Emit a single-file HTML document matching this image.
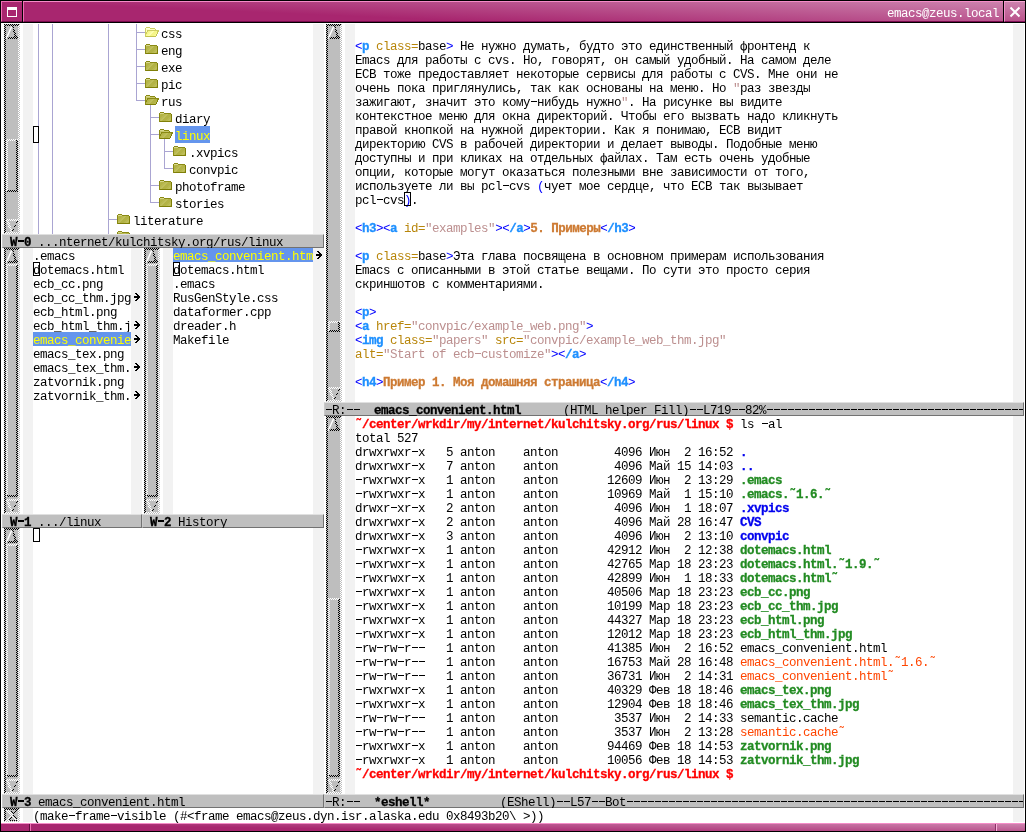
<!DOCTYPE html>
<html><head><meta charset="utf-8"><title>emacs@zeus.local</title>
<style>
html,body{margin:0;padding:0}
body{width:1026px;height:832px;position:relative;overflow:hidden;background:#fff;
 font-family:"Liberation Mono",monospace;font-size:12.5px;color:#000}
.b{position:absolute}
.l{position:absolute;will-change:transform;height:14px;line-height:14px;white-space:pre;letter-spacing:-0.5012px;
 padding-top:1.6736px;box-sizing:content-box;margin-top:0}
.l span{letter-spacing:inherit}
.B,.kt,.kh,.pr,.dr,.ex{-webkit-text-stroke:0.3px}
.B{font-weight:bold}
.d{display:inline-block;width:7px;height:5px;background:linear-gradient(currentColor,currentColor) 1px 0/6px 1px no-repeat}
.B .d,.pr .d,.ex .d,.dr .d{height:6px;background-size:6px 2px}
.kb{color:#0000ff}
.kt{color:#1e90ff;font-weight:bold}
.ka{color:#b8860b}
.ks{color:#bc8f8f}
.kh{color:#cd7a32;font-weight:bold}
.pr{color:#ff0000;font-weight:bold}
.dr{color:#0000ee;font-weight:bold}
.ex{color:#228b22;font-weight:bold}
.bk{color:#ff4500}
.hy{color:#ffff00}
.ml{position:absolute;height:14px;background:#bfbfbf;box-sizing:border-box;
 border-top:1px solid #e0e0e0;border-left:1px solid #cacaca;border-bottom:1px solid #727272;border-right:1px solid #727272}
.ml .l{right:0;overflow:hidden;height:12.4px}
svg{position:absolute;left:0;top:0}
</style></head><body>

<div class="b" style="left:23px;top:24px;width:10px;height:210px;background:#f2f2f2"></div>
<div class="b" style="left:313px;top:24px;width:11px;height:210px;background:#f2f2f2"></div>
<div class="b" style="left:23px;top:248px;width:10px;height:266px;background:#f2f2f2"></div>
<div class="b" style="left:131px;top:248px;width:11px;height:266px;background:#f2f2f2"></div>
<div class="b" style="left:163px;top:248px;width:10px;height:266px;background:#f2f2f2"></div>
<div class="b" style="left:313px;top:248px;width:11px;height:266px;background:#f2f2f2"></div>
<div class="b" style="left:23px;top:528px;width:10px;height:266px;background:#f2f2f2"></div>
<div class="b" style="left:313px;top:528px;width:11px;height:266px;background:#f2f2f2"></div>
<div class="b" style="left:345px;top:24px;width:10px;height:378px;background:#f2f2f2"></div>
<div class="b" style="left:1013px;top:24px;width:11px;height:378px;background:#f2f2f2"></div>
<div class="b" style="left:345px;top:416px;width:10px;height:378px;background:#f2f2f2"></div>
<div class="b" style="left:1013px;top:416px;width:11px;height:378px;background:#f2f2f2"></div>
<div class="b" style="left:23px;top:808px;width:10px;height:14px;background:#f2f2f2"></div>
<div class="b" style="left:1013px;top:808px;width:11px;height:14px;background:#f2f2f2"></div>
<div class="l" style="left:161px;top:26px">css</div>
<div class="l" style="left:161px;top:43px">eng</div>
<div class="l" style="left:161px;top:60px">exe</div>
<div class="l" style="left:161px;top:77px">pic</div>
<div class="l" style="left:161px;top:94px">rus</div>
<div class="l" style="left:175px;top:111px">diary</div>
<div class="b" style="left:175px;top:126px;width:35px;height:17px;background:#6495ed"></div>
<div class="l" style="left:175px;top:128px"><span class="hy">linux</span></div>
<div class="l" style="left:189px;top:145px">.xvpics</div>
<div class="l" style="left:189px;top:162px">convpic</div>
<div class="l" style="left:175px;top:179px">photoframe</div>
<div class="l" style="left:175px;top:196px">stories</div>
<div class="l" style="left:133px;top:213px">literature</div>
<div class="l" style="left:33px;top:248px">.emacs</div>
<div class="l" style="left:33px;top:262px">dotemacs.html</div>
<div class="l" style="left:33px;top:276px">ecb_cc.png</div>
<div class="l" style="left:33px;top:290px">ecb_cc_thm.jpg</div>
<div class="l" style="left:33px;top:304px">ecb_html.png</div>
<div class="l" style="left:33px;top:318px">ecb_html_thm.j</div>
<div class="b" style="left:33px;top:332px;width:98px;height:14px;background:#6495ed"></div>
<div class="l" style="left:33px;top:332px"><span class="hy">emacs_convenie</span></div>
<div class="l" style="left:33px;top:346px">emacs_tex.png</div>
<div class="l" style="left:33px;top:360px">emacs_tex_thm.</div>
<div class="l" style="left:33px;top:374px">zatvornik.png</div>
<div class="l" style="left:33px;top:388px">zatvornik_thm.</div>
<div class="b" style="left:173px;top:248px;width:140px;height:14px;background:#6495ed"></div>
<div class="l" style="left:173px;top:248px"><span class="hy">emacs_convenient.htm</span></div>
<div class="l" style="left:173px;top:262px">dotemacs.html</div>
<div class="l" style="left:173px;top:276px">.emacs</div>
<div class="l" style="left:173px;top:290px">RusGenStyle.css</div>
<div class="l" style="left:173px;top:304px">dataformer.cpp</div>
<div class="l" style="left:173px;top:318px">dreader.h</div>
<div class="l" style="left:173px;top:332px">Makefile</div>
<div class="l" style="left:355px;top:38px"><span class="kb">&lt;</span><span class="kt">p</span> <span class="ka">class=</span>base<span class="kb">&gt;</span> Не нужно думать, будто это единственный фронтенд к</div>
<div class="l" style="left:355px;top:52px">Emacs для работы с cvs. Но, говорят, он самый удобный. На самом деле</div>
<div class="l" style="left:355px;top:66px">ECB тоже предоставляет некоторые сервисы для работы с CVS. Мне они не</div>
<div class="l" style="left:355px;top:80px">очень пока приглянулись, так как основаны на меню. Но <span class="ks">"</span>раз звезды</div>
<div class="l" style="left:355px;top:94px">зажигают, значит это кому<i class="d"></i>нибудь нужно<span class="ks">"</span>. На рисунке вы видите</div>
<div class="l" style="left:355px;top:108px">контекстное меню для окна директорий. Чтобы его вызвать надо кликнуть</div>
<div class="l" style="left:355px;top:122px">правой кнопкой на нужной директории. Как я понимаю, ECB видит</div>
<div class="l" style="left:355px;top:136px">директорию CVS в рабочей директории и делает выводы. Подобные меню</div>
<div class="l" style="left:355px;top:150px">доступны и при кликах на отдельных файлах. Там есть очень удобные</div>
<div class="l" style="left:355px;top:164px">опции, которые могут оказаться полезными вне зависимости от того,</div>
<div class="l" style="left:355px;top:178px">используете ли вы pcl<i class="d"></i>cvs <span class="kb">(</span>чует мое сердце, что ECB так вызывает</div>
<div class="l" style="left:355px;top:192px">pcl<i class="d"></i>cvs<span class="kb">)</span>.</div>
<div class="l" style="left:355px;top:220px"><span class="kb">&lt;</span><span class="kt">h3</span><span class="kb">&gt;</span><span class="kb">&lt;</span><span class="kt">a</span> <span class="ka">id=</span><span class="ks">"examples"</span><span class="kb">&gt;</span><span class="kb">&lt;</span><span class="kt">/a</span><span class="kb">&gt;</span><span class="kh">5. Примеры</span><span class="kb">&lt;</span><span class="kt">/h3</span><span class="kb">&gt;</span></div>
<div class="l" style="left:355px;top:248px"><span class="kb">&lt;</span><span class="kt">p</span> <span class="ka">class=</span>base<span class="kb">&gt;</span>Эта глава посвящена в основном примерам использования</div>
<div class="l" style="left:355px;top:262px">Emacs с описанными в этой статье вещами. По сути это просто серия</div>
<div class="l" style="left:355px;top:276px">скриншотов с комментариями.</div>
<div class="l" style="left:355px;top:304px"><span class="kb">&lt;</span><span class="kt">p</span><span class="kb">&gt;</span></div>
<div class="l" style="left:355px;top:318px"><span class="kb">&lt;</span><span class="kt">a</span> <span class="ka">href=</span><span class="ks">"convpic/example_web.png"</span><span class="kb">&gt;</span></div>
<div class="l" style="left:355px;top:332px"><span class="kb">&lt;</span><span class="kt">img</span> <span class="ka">class=</span><span class="ks">"papers"</span> <span class="ka">src=</span><span class="ks">"convpic/example_web_thm.jpg"</span></div>
<div class="l" style="left:355px;top:346px"><span class="ka">alt=</span><span class="ks">"Start of ecb<i class="d"></i>customize"</span><span class="kb">&gt;</span><span class="kb">&lt;</span><span class="kt">/a</span><span class="kb">&gt;</span></div>
<div class="l" style="left:355px;top:374px"><span class="kb">&lt;</span><span class="kt">h4</span><span class="kb">&gt;</span><span class="kh">Пример 1. Моя домашняя страница</span><span class="kb">&lt;</span><span class="kt">/h4</span><span class="kb">&gt;</span></div>
<div class="l" style="left:355px;top:416px"><span class="pr">˜/center/wrkdir/my/internet/kulchitsky.org/rus/linux $ </span>ls <i class="d"></i>al</div>
<div class="l" style="left:355px;top:430px">total 527</div>
<div class="l" style="left:355px;top:444px">drwxrwxr<i class="d"></i>x   5 anton    anton        4096 Июн  2 16:52 <span class="dr">.</span></div>
<div class="l" style="left:355px;top:458px">drwxrwxr<i class="d"></i>x   7 anton    anton        4096 Май 15 14:03 <span class="dr">..</span></div>
<div class="l" style="left:355px;top:472px"><i class="d"></i>rwxrwxr<i class="d"></i>x   1 anton    anton       12609 Июн  2 13:29 <span class="ex">.emacs</span></div>
<div class="l" style="left:355px;top:486px"><i class="d"></i>rwxrwxr<i class="d"></i>x   1 anton    anton       10969 Май  1 15:10 <span class="ex">.emacs.˜1.6.˜</span></div>
<div class="l" style="left:355px;top:500px">drwxr<i class="d"></i>xr<i class="d"></i>x   2 anton    anton        4096 Июн  1 18:07 <span class="dr">.xvpics</span></div>
<div class="l" style="left:355px;top:514px">drwxrwxr<i class="d"></i>x   2 anton    anton        4096 Май 28 16:47 <span class="dr">CVS</span></div>
<div class="l" style="left:355px;top:528px">drwxrwxr<i class="d"></i>x   3 anton    anton        4096 Июн  2 13:10 <span class="dr">convpic</span></div>
<div class="l" style="left:355px;top:542px"><i class="d"></i>rwxrwxr<i class="d"></i>x   1 anton    anton       42912 Июн  2 12:38 <span class="ex">dotemacs.html</span></div>
<div class="l" style="left:355px;top:556px"><i class="d"></i>rwxrwxr<i class="d"></i>x   1 anton    anton       42765 Мар 18 23:23 <span class="ex">dotemacs.html.˜1.9.˜</span></div>
<div class="l" style="left:355px;top:570px"><i class="d"></i>rwxrwxr<i class="d"></i>x   1 anton    anton       42899 Июн  1 18:33 <span class="ex">dotemacs.html˜</span></div>
<div class="l" style="left:355px;top:584px"><i class="d"></i>rwxrwxr<i class="d"></i>x   1 anton    anton       40506 Мар 18 23:23 <span class="ex">ecb_cc.png</span></div>
<div class="l" style="left:355px;top:598px"><i class="d"></i>rwxrwxr<i class="d"></i>x   1 anton    anton       10199 Мар 18 23:23 <span class="ex">ecb_cc_thm.jpg</span></div>
<div class="l" style="left:355px;top:612px"><i class="d"></i>rwxrwxr<i class="d"></i>x   1 anton    anton       44327 Мар 18 23:23 <span class="ex">ecb_html.png</span></div>
<div class="l" style="left:355px;top:626px"><i class="d"></i>rwxrwxr<i class="d"></i>x   1 anton    anton       12012 Мар 18 23:23 <span class="ex">ecb_html_thm.jpg</span></div>
<div class="l" style="left:355px;top:640px"><i class="d"></i>rw<i class="d"></i>rw<i class="d"></i>r<i class="d"></i><i class="d"></i>   1 anton    anton       41385 Июн  2 16:52 emacs_convenient.html</div>
<div class="l" style="left:355px;top:654px"><i class="d"></i>rw<i class="d"></i>rw<i class="d"></i>r<i class="d"></i><i class="d"></i>   1 anton    anton       16753 Май 28 16:48 <span class="bk">emacs_convenient.html.˜1.6.˜</span></div>
<div class="l" style="left:355px;top:668px"><i class="d"></i>rw<i class="d"></i>rw<i class="d"></i>r<i class="d"></i><i class="d"></i>   1 anton    anton       36731 Июн  2 14:31 <span class="bk">emacs_convenient.html˜</span></div>
<div class="l" style="left:355px;top:682px"><i class="d"></i>rwxrwxr<i class="d"></i>x   1 anton    anton       40329 Фев 18 18:46 <span class="ex">emacs_tex.png</span></div>
<div class="l" style="left:355px;top:696px"><i class="d"></i>rwxrwxr<i class="d"></i>x   1 anton    anton       12904 Фев 18 18:46 <span class="ex">emacs_tex_thm.jpg</span></div>
<div class="l" style="left:355px;top:710px"><i class="d"></i>rw<i class="d"></i>rw<i class="d"></i>r<i class="d"></i><i class="d"></i>   1 anton    anton        3537 Июн  2 14:33 semantic.cache</div>
<div class="l" style="left:355px;top:724px"><i class="d"></i>rw<i class="d"></i>rw<i class="d"></i>r<i class="d"></i><i class="d"></i>   1 anton    anton        3537 Июн  2 13:28 <span class="bk">semantic.cache˜</span></div>
<div class="l" style="left:355px;top:738px"><i class="d"></i>rwxrwxr<i class="d"></i>x   1 anton    anton       94469 Фев 18 14:53 <span class="ex">zatvornik.png</span></div>
<div class="l" style="left:355px;top:752px"><i class="d"></i>rwxrwxr<i class="d"></i>x   1 anton    anton       10056 Фев 18 14:53 <span class="ex">zatvornik_thm.jpg</span></div>
<div class="l" style="left:355px;top:766px"><span class="pr">˜/center/wrkdir/my/internet/kulchitsky.org/rus/linux $ </span></div>
<div class="l" style="left:33px;top:808px">(make<i class="d"></i>frame<i class="d"></i>visible (#&lt;frame emacs@zeus.dyn.isr.alaska.edu 0x8493b20\ &gt;))</div>
<div class="ml" style="left:2px;top:234px;width:322px">
<div class="l" style="left:0;top:-1px"> <span class="B">W<i class="d"></i>0</span> ...nternet/kulchitsky.org/rus/linux</div></div>
<div class="ml" style="left:2px;top:514px;width:140px">
<div class="l" style="left:0;top:-1px"> <span class="B">W<i class="d"></i>1</span> .../linux</div></div>
<div class="ml" style="left:142px;top:514px;width:182px">
<div class="l" style="left:0;top:-1px"> <span class="B">W<i class="d"></i>2</span> History</div></div>
<div class="ml" style="left:2px;top:794px;width:322px">
<div class="l" style="left:0;top:-1px"> <span class="B">W<i class="d"></i>3</span> emacs_convenient.html</div></div>
<div class="ml" style="left:324px;top:402px;width:700px">
<div class="l" style="left:0;top:-1px"><i class="d"></i>R:<i class="d"></i><i class="d"></i>  <span class="B">emacs_convenient.html</span>      (HTML helper Fill)<i class="d"></i><i class="d"></i>L719<i class="d"></i><i class="d"></i>82%<i class="d"></i><i class="d"></i><i class="d"></i><i class="d"></i><i class="d"></i><i class="d"></i><i class="d"></i><i class="d"></i><i class="d"></i><i class="d"></i><i class="d"></i><i class="d"></i><i class="d"></i><i class="d"></i><i class="d"></i><i class="d"></i><i class="d"></i><i class="d"></i><i class="d"></i><i class="d"></i><i class="d"></i><i class="d"></i><i class="d"></i><i class="d"></i><i class="d"></i><i class="d"></i><i class="d"></i><i class="d"></i><i class="d"></i><i class="d"></i><i class="d"></i><i class="d"></i><i class="d"></i><i class="d"></i><i class="d"></i><i class="d"></i><i class="d"></i><i class="d"></i><i class="d"></i><i class="d"></i><i class="d"></i><i class="d"></i><i class="d"></i><i class="d"></i><i class="d"></i><i class="d"></i><i class="d"></i><i class="d"></i><i class="d"></i><i class="d"></i><i class="d"></i><i class="d"></i><i class="d"></i><i class="d"></i><i class="d"></i><i class="d"></i><i class="d"></i><i class="d"></i><i class="d"></i><i class="d"></i></div></div>
<div class="ml" style="left:324px;top:794px;width:700px">
<div class="l" style="left:0;top:-1px"><i class="d"></i>R:<i class="d"></i><i class="d"></i>  <span class="B">*eshell*</span>          (EShell)<i class="d"></i><i class="d"></i>L57<i class="d"></i><i class="d"></i>Bot<i class="d"></i><i class="d"></i><i class="d"></i><i class="d"></i><i class="d"></i><i class="d"></i><i class="d"></i><i class="d"></i><i class="d"></i><i class="d"></i><i class="d"></i><i class="d"></i><i class="d"></i><i class="d"></i><i class="d"></i><i class="d"></i><i class="d"></i><i class="d"></i><i class="d"></i><i class="d"></i><i class="d"></i><i class="d"></i><i class="d"></i><i class="d"></i><i class="d"></i><i class="d"></i><i class="d"></i><i class="d"></i><i class="d"></i><i class="d"></i><i class="d"></i><i class="d"></i><i class="d"></i><i class="d"></i><i class="d"></i><i class="d"></i><i class="d"></i><i class="d"></i><i class="d"></i><i class="d"></i><i class="d"></i><i class="d"></i><i class="d"></i><i class="d"></i><i class="d"></i><i class="d"></i><i class="d"></i><i class="d"></i><i class="d"></i><i class="d"></i><i class="d"></i><i class="d"></i><i class="d"></i><i class="d"></i><i class="d"></i><i class="d"></i><i class="d"></i><i class="d"></i><i class="d"></i><i class="d"></i><i class="d"></i><i class="d"></i><i class="d"></i><i class="d"></i><i class="d"></i><i class="d"></i><i class="d"></i><i class="d"></i><i class="d"></i><i class="d"></i></div></div>
<div class="b" style="left:0;top:0;width:1026px;height:23px;background:#000"></div>
<div class="b" style="left:1px;top:1px;width:21px;height:21px;background:#a8266f;box-sizing:border-box;border-top:1px solid #f070b4;border-left:1px solid #f070b4;border-bottom:1px solid #6e0e46"></div>
<div class="b" style="left:23px;top:1px;width:980px;height:21px;background:linear-gradient(2.42deg,#a8266f 0%,#a8266f 31%,#cc82ad 100%);box-sizing:border-box;border-top:1px solid #f58cc8;border-left:1px solid #f070b4;border-bottom:1px solid #780a4c"></div>
<div class="b" style="left:1004px;top:1px;width:21px;height:21px;background:linear-gradient(180deg,#cc82ad,#b9528a);box-sizing:border-box;border-top:1px solid #f8a8d4;border-left:1px solid #f090c8;border-bottom:1px solid #801058"></div>
<div class="l" style="left:887px;top:5px;color:#fff">emacs@zeus.local</div>

<div class="b" style="left:0;top:823px;width:1026px;height:9px;background:#000"></div>
<div class="b" style="left:1px;top:823px;width:1024px;height:8px;background:linear-gradient(0.87deg,#a8266f 0%,#a8266f 31%,#cc82ad 100%);box-sizing:border-box;border-top:1px solid #f58cc8"></div>
<div class="b" style="left:29px;top:824px;width:1px;height:7px;background:#5e0a3c"></div>
<div class="b" style="left:30px;top:824px;width:1px;height:7px;background:#f070b4"></div>
<div class="b" style="left:995px;top:824px;width:1px;height:7px;background:#8a3066"></div>
<div class="b" style="left:996px;top:824px;width:1px;height:7px;background:#fbb4dc"></div>

<div class="b" style="left:0px;top:0px;width:1px;height:832px;background:#000"></div>
<div class="b" style="left:1025px;top:0px;width:1px;height:832px;background:#000"></div>
<svg width="1026" height="832" viewBox="0 0 1026 832" shape-rendering="crispEdges">
<defs>
<pattern id="pd" width="2" height="2" patternUnits="userSpaceOnUse"><rect width="2" height="2" fill="#bebebe"/><rect x="0" y="0" width="1" height="1" fill="#000"/><rect x="1" y="1" width="1" height="1" fill="#000"/></pattern>
<pattern id="pl" width="2" height="2" patternUnits="userSpaceOnUse"><rect width="2" height="2" fill="#bebebe"/><rect x="0" y="0" width="1" height="1" fill="#fff"/><rect x="1" y="1" width="1" height="1" fill="#fff"/></pattern>
<linearGradient id="fg" x1="0" y1="0" x2="1" y2="1"><stop offset="0" stop-color="#a9a93c"/><stop offset="0.5" stop-color="#c0c062"/><stop offset="1" stop-color="#a3a334"/></linearGradient>
<linearGradient id="fy" x1="0" y1="0" x2="1" y2="1"><stop offset="0" stop-color="#fbfbb0"/><stop offset="1" stop-color="#f3f38a"/></linearGradient>
<g id="fc"><rect x="1" y="0" width="4" height="1" fill="#8a8a14"/><rect x="0" y="1" width="1" height="1" fill="#8a8a14"/><rect x="1" y="1" width="4" height="1" fill="#d8d88c"/><rect x="5" y="1" width="7" height="1" fill="#8a8a14"/><rect x="0" y="2" width="1" height="1" fill="#8a8a14"/><rect x="1" y="2" width="1" height="1" fill="#b9b950"/><rect x="2" y="2" width="3" height="1" fill="#b3b346"/><rect x="5" y="2" width="2" height="1" fill="#b9b950"/><rect x="7" y="2" width="2" height="1" fill="#bfbf5c"/><rect x="9" y="2" width="3" height="1" fill="#b3b346"/><rect x="12" y="2" width="1" height="1" fill="#7f7f08"/><rect x="0" y="3" width="1" height="1" fill="#8a8a14"/><rect x="1" y="3" width="3" height="1" fill="#b3b346"/><rect x="4" y="3" width="2" height="1" fill="#b9b950"/><rect x="6" y="3" width="2" height="1" fill="#bfbf5c"/><rect x="8" y="3" width="4" height="1" fill="#b3b346"/><rect x="12" y="3" width="1" height="1" fill="#7f7f08"/><rect x="0" y="4" width="1" height="1" fill="#8a8a14"/><rect x="1" y="4" width="2" height="1" fill="#b3b346"/><rect x="3" y="4" width="2" height="1" fill="#b9b950"/><rect x="5" y="4" width="2" height="1" fill="#bfbf5c"/><rect x="7" y="4" width="4" height="1" fill="#b3b346"/><rect x="11" y="4" width="1" height="1" fill="#b9b950"/><rect x="12" y="4" width="1" height="1" fill="#7f7f08"/><rect x="0" y="5" width="1" height="1" fill="#8a8a14"/><rect x="1" y="5" width="1" height="1" fill="#b3b346"/><rect x="2" y="5" width="2" height="1" fill="#b9b950"/><rect x="4" y="5" width="2" height="1" fill="#bfbf5c"/><rect x="6" y="5" width="4" height="1" fill="#b3b346"/><rect x="10" y="5" width="2" height="1" fill="#b9b950"/><rect x="12" y="5" width="1" height="1" fill="#7f7f08"/><rect x="0" y="6" width="1" height="1" fill="#8a8a14"/><rect x="1" y="6" width="2" height="1" fill="#b9b950"/><rect x="3" y="6" width="2" height="1" fill="#bfbf5c"/><rect x="5" y="6" width="4" height="1" fill="#b3b346"/><rect x="9" y="6" width="2" height="1" fill="#b9b950"/><rect x="11" y="6" width="1" height="1" fill="#bfbf5c"/><rect x="12" y="6" width="1" height="1" fill="#7f7f08"/><rect x="0" y="7" width="1" height="1" fill="#8a8a14"/><rect x="1" y="7" width="1" height="1" fill="#b9b950"/><rect x="2" y="7" width="2" height="1" fill="#bfbf5c"/><rect x="4" y="7" width="4" height="1" fill="#b3b346"/><rect x="8" y="7" width="2" height="1" fill="#b9b950"/><rect x="10" y="7" width="2" height="1" fill="#bfbf5c"/><rect x="12" y="7" width="1" height="1" fill="#7f7f08"/><rect x="0" y="8" width="1" height="1" fill="#8a8a14"/><rect x="1" y="8" width="2" height="1" fill="#bfbf5c"/><rect x="3" y="8" width="4" height="1" fill="#b3b346"/><rect x="7" y="8" width="2" height="1" fill="#b9b950"/><rect x="9" y="8" width="2" height="1" fill="#bfbf5c"/><rect x="11" y="8" width="1" height="1" fill="#b3b346"/><rect x="12" y="8" width="1" height="1" fill="#7f7f08"/><rect x="0" y="9" width="1" height="1" fill="#8a8a14"/><rect x="1" y="9" width="12" height="1" fill="#7f7f08"/></g>
<g id="fo"><rect x="1" y="0" width="4" height="1" fill="#8a8a14"/><rect x="0" y="1" width="1" height="1" fill="#8a8a14"/><rect x="1" y="1" width="4" height="1" fill="#d8d88c"/><rect x="5" y="1" width="5" height="1" fill="#8a8a14"/><rect x="0" y="2" width="1" height="1" fill="#8a8a14"/><rect x="1" y="2" width="9" height="1" fill="#c6c66a"/><rect x="10" y="2" width="1" height="1" fill="#8a8a14"/><rect x="0" y="3" width="1" height="1" fill="#8a8a14"/><rect x="1" y="3" width="1" height="1" fill="#c6c66a"/><rect x="2" y="3" width="12" height="1" fill="#8a8a14"/><rect x="0" y="4" width="1" height="1" fill="#8a8a14"/><rect x="1" y="4" width="1" height="1" fill="#c6c66a"/><rect x="2" y="4" width="1" height="1" fill="#8a8a14"/><rect x="3" y="4" width="2" height="1" fill="#b3b346"/><rect x="5" y="4" width="2" height="1" fill="#b9b950"/><rect x="7" y="4" width="2" height="1" fill="#bfbf5c"/><rect x="9" y="4" width="3" height="1" fill="#b3b346"/><rect x="12" y="4" width="2" height="1" fill="#8a8a14"/><rect x="0" y="5" width="2" height="1" fill="#8a8a14"/><rect x="2" y="5" width="2" height="1" fill="#b3b346"/><rect x="4" y="5" width="2" height="1" fill="#b9b950"/><rect x="6" y="5" width="2" height="1" fill="#bfbf5c"/><rect x="8" y="5" width="4" height="1" fill="#b3b346"/><rect x="12" y="5" width="1" height="1" fill="#7f7f08"/><rect x="0" y="6" width="2" height="1" fill="#8a8a14"/><rect x="2" y="6" width="1" height="1" fill="#b3b346"/><rect x="3" y="6" width="2" height="1" fill="#b9b950"/><rect x="5" y="6" width="2" height="1" fill="#bfbf5c"/><rect x="7" y="6" width="4" height="1" fill="#b3b346"/><rect x="11" y="6" width="1" height="1" fill="#b9b950"/><rect x="12" y="6" width="1" height="1" fill="#7f7f08"/><rect x="0" y="7" width="1" height="1" fill="#8a8a14"/><rect x="1" y="7" width="1" height="1" fill="#b3b346"/><rect x="2" y="7" width="2" height="1" fill="#b9b950"/><rect x="4" y="7" width="2" height="1" fill="#bfbf5c"/><rect x="6" y="7" width="4" height="1" fill="#b3b346"/><rect x="10" y="7" width="1" height="1" fill="#b9b950"/><rect x="11" y="7" width="1" height="1" fill="#7f7f08"/><rect x="0" y="8" width="1" height="1" fill="#8a8a14"/><rect x="1" y="8" width="2" height="1" fill="#b9b950"/><rect x="3" y="8" width="2" height="1" fill="#bfbf5c"/><rect x="5" y="8" width="4" height="1" fill="#b3b346"/><rect x="9" y="8" width="2" height="1" fill="#b9b950"/><rect x="11" y="8" width="1" height="1" fill="#7f7f08"/><rect x="0" y="9" width="1" height="1" fill="#8a8a14"/><rect x="1" y="9" width="10" height="1" fill="#7f7f08"/></g>
<g id="fe"><rect x="1" y="0" width="4" height="1" fill="#cdcd62"/><rect x="0" y="1" width="1" height="1" fill="#cdcd62"/><rect x="1" y="1" width="4" height="1" fill="#ffffe0"/><rect x="5" y="1" width="5" height="1" fill="#cdcd62"/><rect x="0" y="2" width="1" height="1" fill="#cdcd62"/><rect x="1" y="2" width="9" height="1" fill="#ffffc4"/><rect x="10" y="2" width="1" height="1" fill="#cdcd62"/><rect x="0" y="3" width="1" height="1" fill="#cdcd62"/><rect x="1" y="3" width="1" height="1" fill="#ffffc4"/><rect x="2" y="3" width="12" height="1" fill="#cdcd62"/><rect x="0" y="4" width="1" height="1" fill="#cdcd62"/><rect x="1" y="4" width="1" height="1" fill="#ffffc4"/><rect x="2" y="4" width="1" height="1" fill="#cdcd62"/><rect x="3" y="4" width="2" height="1" fill="#f6f688"/><rect x="5" y="4" width="2" height="1" fill="#fafa9a"/><rect x="7" y="4" width="2" height="1" fill="#fdfdb0"/><rect x="9" y="4" width="3" height="1" fill="#f6f688"/><rect x="12" y="4" width="2" height="1" fill="#cdcd62"/><rect x="0" y="5" width="2" height="1" fill="#cdcd62"/><rect x="2" y="5" width="2" height="1" fill="#f6f688"/><rect x="4" y="5" width="2" height="1" fill="#fafa9a"/><rect x="6" y="5" width="2" height="1" fill="#fdfdb0"/><rect x="8" y="5" width="4" height="1" fill="#f6f688"/><rect x="12" y="5" width="1" height="1" fill="#c3c350"/><rect x="0" y="6" width="2" height="1" fill="#cdcd62"/><rect x="2" y="6" width="1" height="1" fill="#f6f688"/><rect x="3" y="6" width="2" height="1" fill="#fafa9a"/><rect x="5" y="6" width="2" height="1" fill="#fdfdb0"/><rect x="7" y="6" width="4" height="1" fill="#f6f688"/><rect x="11" y="6" width="1" height="1" fill="#fafa9a"/><rect x="12" y="6" width="1" height="1" fill="#c3c350"/><rect x="0" y="7" width="1" height="1" fill="#cdcd62"/><rect x="1" y="7" width="1" height="1" fill="#f6f688"/><rect x="2" y="7" width="2" height="1" fill="#fafa9a"/><rect x="4" y="7" width="2" height="1" fill="#fdfdb0"/><rect x="6" y="7" width="4" height="1" fill="#f6f688"/><rect x="10" y="7" width="1" height="1" fill="#fafa9a"/><rect x="11" y="7" width="1" height="1" fill="#c3c350"/><rect x="0" y="8" width="1" height="1" fill="#cdcd62"/><rect x="1" y="8" width="2" height="1" fill="#fafa9a"/><rect x="3" y="8" width="2" height="1" fill="#fdfdb0"/><rect x="5" y="8" width="4" height="1" fill="#f6f688"/><rect x="9" y="8" width="2" height="1" fill="#fafa9a"/><rect x="11" y="8" width="1" height="1" fill="#c3c350"/><rect x="0" y="9" width="1" height="1" fill="#cdcd62"/><rect x="1" y="9" width="10" height="1" fill="#c3c350"/></g>
<g id="ra" fill="#000"><rect x="3" y="0" width="2" height="1"/><rect x="4" y="1" width="2" height="1"/><rect x="5" y="2" width="2" height="1"/><rect x="2" y="3" width="6" height="2"/><rect x="5" y="5" width="2" height="1"/><rect x="4" y="6" width="2" height="1"/><rect x="3" y="7" width="2" height="1"/></g>
</defs>
<rect x="38" y="24" width="1" height="210" fill="#aaa5d2"/>
<rect x="52" y="24" width="1" height="210" fill="#aaa5d2"/>
<rect x="108" y="24" width="1" height="210" fill="#aaa5d2"/>
<rect x="136" y="24" width="1" height="77" fill="#aaa5d2"/>
<rect x="150" y="105" width="1" height="98" fill="#aaa5d2"/>
<rect x="164" y="139" width="1" height="30" fill="#aaa5d2"/>
<rect x="137" y="32" width="8" height="1" fill="#aaa5d2"/>
<use href="#fe" x="145" y="27"/>
<rect x="137" y="49" width="8" height="1" fill="#aaa5d2"/>
<use href="#fc" x="145" y="44"/>
<rect x="137" y="66" width="8" height="1" fill="#aaa5d2"/>
<use href="#fc" x="145" y="61"/>
<rect x="137" y="83" width="8" height="1" fill="#aaa5d2"/>
<use href="#fc" x="145" y="78"/>
<rect x="137" y="100" width="8" height="1" fill="#aaa5d2"/>
<use href="#fo" x="145" y="95"/>
<rect x="151" y="117" width="8" height="1" fill="#aaa5d2"/>
<use href="#fc" x="159" y="112"/>
<rect x="151" y="134" width="8" height="1" fill="#aaa5d2"/>
<use href="#fo" x="159" y="129"/>
<rect x="165" y="151" width="8" height="1" fill="#aaa5d2"/>
<use href="#fc" x="173" y="146"/>
<rect x="165" y="168" width="8" height="1" fill="#aaa5d2"/>
<use href="#fc" x="173" y="163"/>
<rect x="151" y="185" width="8" height="1" fill="#aaa5d2"/>
<use href="#fc" x="159" y="180"/>
<rect x="151" y="202" width="8" height="1" fill="#aaa5d2"/>
<use href="#fc" x="159" y="197"/>
<rect x="109" y="219" width="8" height="1" fill="#aaa5d2"/>
<use href="#fc" x="117" y="214"/>
<svg x="117" y="231" width="14" height="3" viewBox="0 0 14 3"><use href="#fc"/></svg>
<use href="#ra" x="132" y="293"/>
<use href="#ra" x="132" y="321"/>
<use href="#ra" x="132" y="335"/>
<use href="#ra" x="132" y="363"/>
<use href="#ra" x="132" y="391"/>
<use href="#ra" x="314" y="251"/>
<rect x="33.5" y="126.5" width="5" height="16" fill="none" stroke="#000" stroke-width="1"/>
<rect x="33.5" y="262.5" width="6" height="13" fill="none" stroke="#000" stroke-width="1"/>
<rect x="173.5" y="262.5" width="6" height="13" fill="none" stroke="#000" stroke-width="1"/>
<rect x="33.5" y="528.5" width="6" height="13" fill="none" stroke="#000" stroke-width="1"/>
<rect x="404.5" y="192.5" width="6" height="13" fill="none" stroke="#000" stroke-width="1"/>
<rect x="4" y="24" width="16" height="210" fill="#bebebe"/>
<rect x="4" y="24" width="2" height="210" fill="url(#pd)"/>
<rect x="4" y="24" width="16" height="2" fill="url(#pd)"/>
<rect x="18" y="25" width="2" height="209" fill="url(#pl)"/>
<rect x="5" y="232" width="15" height="2" fill="url(#pl)"/>
<polygon points="12,26 13,26 18,39 15,39" fill="url(#pd)"/>
<rect x="7" y="37" width="11" height="2" fill="url(#pd)"/>
<line x1="11.7" y1="26.5" x2="6.3" y2="38.5" stroke="#fff" stroke-width="1.5" shape-rendering="auto"/>
<rect x="6" y="219" width="12" height="2" fill="url(#pl)"/>
<polygon points="6,220 8.5,220 12.5,232 10.5,232" fill="url(#pl)"/>
<polygon points="17,221 18.2,221 13.2,231 12,231" fill="url(#pd)"/>
<rect x="6" y="139" width="12" height="53" fill="#bebebe"/>
<rect x="6" y="139" width="12" height="2" fill="url(#pl)"/>
<rect x="6" y="139" width="2" height="53" fill="url(#pl)"/>
<rect x="16" y="140" width="2" height="52" fill="url(#pd)"/>
<rect x="7" y="190" width="11" height="2" fill="url(#pd)"/>
<rect x="4" y="248" width="16" height="266" fill="#bebebe"/>
<rect x="4" y="248" width="2" height="266" fill="url(#pd)"/>
<rect x="4" y="248" width="16" height="2" fill="url(#pd)"/>
<rect x="18" y="249" width="2" height="265" fill="url(#pl)"/>
<rect x="5" y="512" width="15" height="2" fill="url(#pl)"/>
<polygon points="12,250 13,250 18,263 15,263" fill="url(#pd)"/>
<rect x="7" y="261" width="11" height="2" fill="url(#pd)"/>
<line x1="11.7" y1="250.5" x2="6.3" y2="262.5" stroke="#fff" stroke-width="1.5" shape-rendering="auto"/>
<rect x="6" y="499" width="12" height="2" fill="url(#pl)"/>
<polygon points="6,500 8.5,500 12.5,512 10.5,512" fill="url(#pl)"/>
<polygon points="17,501 18.2,501 13.2,511 12,511" fill="url(#pd)"/>
<rect x="6" y="264" width="12" height="233" fill="#bebebe"/>
<rect x="6" y="264" width="12" height="2" fill="url(#pl)"/>
<rect x="6" y="264" width="2" height="233" fill="url(#pl)"/>
<rect x="16" y="265" width="2" height="232" fill="url(#pd)"/>
<rect x="7" y="495" width="11" height="2" fill="url(#pd)"/>
<rect x="144" y="248" width="16" height="266" fill="#bebebe"/>
<rect x="144" y="248" width="2" height="266" fill="url(#pd)"/>
<rect x="144" y="248" width="16" height="2" fill="url(#pd)"/>
<rect x="158" y="249" width="2" height="265" fill="url(#pl)"/>
<rect x="145" y="512" width="15" height="2" fill="url(#pl)"/>
<polygon points="152,250 153,250 158,263 155,263" fill="url(#pd)"/>
<rect x="147" y="261" width="11" height="2" fill="url(#pd)"/>
<line x1="151.7" y1="250.5" x2="146.3" y2="262.5" stroke="#fff" stroke-width="1.5" shape-rendering="auto"/>
<rect x="146" y="499" width="12" height="2" fill="url(#pl)"/>
<polygon points="146,500 148.5,500 152.5,512 150.5,512" fill="url(#pl)"/>
<polygon points="157,501 158.2,501 153.2,511 152,511" fill="url(#pd)"/>
<rect x="146" y="264" width="12" height="233" fill="#bebebe"/>
<rect x="146" y="264" width="12" height="2" fill="url(#pl)"/>
<rect x="146" y="264" width="2" height="233" fill="url(#pl)"/>
<rect x="156" y="265" width="2" height="232" fill="url(#pd)"/>
<rect x="147" y="495" width="11" height="2" fill="url(#pd)"/>
<rect x="4" y="528" width="16" height="266" fill="#bebebe"/>
<rect x="4" y="528" width="2" height="266" fill="url(#pd)"/>
<rect x="4" y="528" width="16" height="2" fill="url(#pd)"/>
<rect x="18" y="529" width="2" height="265" fill="url(#pl)"/>
<rect x="5" y="792" width="15" height="2" fill="url(#pl)"/>
<polygon points="12,530 13,530 18,543 15,543" fill="url(#pd)"/>
<rect x="7" y="541" width="11" height="2" fill="url(#pd)"/>
<line x1="11.7" y1="530.5" x2="6.3" y2="542.5" stroke="#fff" stroke-width="1.5" shape-rendering="auto"/>
<rect x="6" y="779" width="12" height="2" fill="url(#pl)"/>
<polygon points="6,780 8.5,780 12.5,792 10.5,792" fill="url(#pl)"/>
<polygon points="17,781 18.2,781 13.2,791 12,791" fill="url(#pd)"/>
<rect x="6" y="544" width="12" height="233" fill="#bebebe"/>
<rect x="6" y="544" width="12" height="2" fill="url(#pl)"/>
<rect x="6" y="544" width="2" height="233" fill="url(#pl)"/>
<rect x="16" y="545" width="2" height="232" fill="url(#pd)"/>
<rect x="7" y="775" width="11" height="2" fill="url(#pd)"/>
<rect x="326" y="24" width="16" height="378" fill="#bebebe"/>
<rect x="326" y="24" width="2" height="378" fill="url(#pd)"/>
<rect x="326" y="24" width="16" height="2" fill="url(#pd)"/>
<rect x="340" y="25" width="2" height="377" fill="url(#pl)"/>
<rect x="327" y="400" width="15" height="2" fill="url(#pl)"/>
<polygon points="334,26 335,26 340,39 337,39" fill="url(#pd)"/>
<rect x="329" y="37" width="11" height="2" fill="url(#pd)"/>
<line x1="333.7" y1="26.5" x2="328.3" y2="38.5" stroke="#fff" stroke-width="1.5" shape-rendering="auto"/>
<rect x="328" y="387" width="12" height="2" fill="url(#pl)"/>
<polygon points="328,388 330.5,388 334.5,400 332.5,400" fill="url(#pl)"/>
<polygon points="339,389 340.2,389 335.2,399 334,399" fill="url(#pd)"/>
<rect x="328" y="321" width="12" height="11" fill="#bebebe"/>
<rect x="328" y="321" width="12" height="2" fill="url(#pl)"/>
<rect x="328" y="321" width="2" height="11" fill="url(#pl)"/>
<rect x="338" y="322" width="2" height="10" fill="url(#pd)"/>
<rect x="329" y="330" width="11" height="2" fill="url(#pd)"/>
<rect x="326" y="416" width="16" height="378" fill="#bebebe"/>
<rect x="326" y="416" width="2" height="378" fill="url(#pd)"/>
<rect x="326" y="416" width="16" height="2" fill="url(#pd)"/>
<rect x="340" y="417" width="2" height="377" fill="url(#pl)"/>
<rect x="327" y="792" width="15" height="2" fill="url(#pl)"/>
<polygon points="334,418 335,418 340,431 337,431" fill="url(#pd)"/>
<rect x="329" y="429" width="11" height="2" fill="url(#pd)"/>
<line x1="333.7" y1="418.5" x2="328.3" y2="430.5" stroke="#fff" stroke-width="1.5" shape-rendering="auto"/>
<rect x="328" y="779" width="12" height="2" fill="url(#pl)"/>
<polygon points="328,780 330.5,780 334.5,792 332.5,792" fill="url(#pl)"/>
<polygon points="339,781 340.2,781 335.2,791 334,791" fill="url(#pd)"/>
<rect x="328" y="598" width="12" height="179" fill="#bebebe"/>
<rect x="328" y="598" width="12" height="2" fill="url(#pl)"/>
<rect x="328" y="598" width="2" height="179" fill="url(#pl)"/>
<rect x="338" y="599" width="2" height="178" fill="url(#pd)"/>
<rect x="329" y="775" width="11" height="2" fill="url(#pd)"/>
<rect x="4" y="808" width="16" height="14" fill="#bebebe"/>
<rect x="4" y="808" width="2" height="14" fill="url(#pd)"/><rect x="4" y="808" width="16" height="2" fill="url(#pd)"/>
<rect x="18" y="809" width="2" height="13" fill="url(#pl)"/><rect x="5" y="820" width="15" height="2" fill="url(#pl)"/>
<polygon points="6,810 8.5,810 18,820 15.5,820" fill="url(#pl)"/>
<polygon points="6,820 8.5,820 13,815 11.5,814" fill="url(#pl)"/>
<polygon points="16.5,810 18,810 9.5,820 8,820" fill="url(#pd)"/>
<polygon points="11,811 12.4,811 17.4,820 16,820" fill="url(#pd)"/>
<rect x="9" y="820" width="9" height="1" fill="url(#pd)"/>
<rect x="7.5" y="7.5" width="9" height="9" fill="none" stroke="#fff" stroke-width="1"/><rect x="7" y="7" width="10" height="3" fill="#fff"/>
<path d="M1010.5 7.5L1019.5 16.5M1019.5 7.5L1010.5 16.5" stroke="#fff" stroke-width="2" fill="none" shape-rendering="auto"/>
</svg>
</body></html>
